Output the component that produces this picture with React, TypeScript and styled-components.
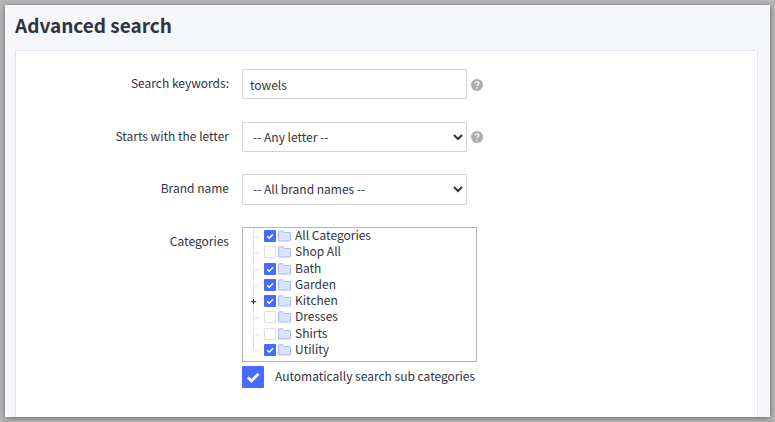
import React from "react";
import styled, { createGlobalStyle } from "styled-components";

const GlobalStyle = createGlobalStyle`
  *, *::before, *::after { box-sizing: border-box; }
  html, body { margin: 0; background: #b7b7b8; }
  body, input, select {
    font-family: "Source Sans Pro", "Noto Sans CJK SC", sans-serif;
    font-size: 12px;
    color: #313440;
  }
`;

const Backdrop = styled.div`
  display: flex;
  min-height: 100vh;
  padding: 5px;
`;

const Page = styled.main`
  display: flex;
  flex: 1;
  flex-direction: column;
  padding: 0 12px 0 10px;
  background: #f5f7fa;
  box-shadow: 0 1px 6px rgba(0, 0, 0, 0.45);
`;

const Title = styled.h1`
  margin: 0;
  height: 45px;
  font-size: 19px;
  font-weight: 700;
  line-height: 40px;
  color: #313440;
`;

const Panel = styled.form`
  display: flex;
  flex: 1;
  flex-direction: column;
  gap: 22px;
  padding: 18px 0 28px;
  background: #fff;
  border: 1px solid #e2e5ee;
  border-bottom: 0;
`;

const Row = styled.div`
  display: grid;
  grid-template-columns: 213px 1fr;
  column-gap: 13px;
  align-items: start;
`;

const Label = styled.label`
  text-align: right;
  line-height: 28px;
`;

const Caption = styled.span`
  text-align: right;
  line-height: 28px;
`;

const Control = styled.div<{ $height: number }>`
  display: flex;
  align-items: center;
  gap: 4px;
  height: ${(p) => p.$height}px;
`;

const TextInput = styled.input`
  align-self: flex-start;
  width: 225px;
  height: 30px;
  padding: 0 7px;
  background: #fff;
  border: 1px solid #d3d4d6;
  border-radius: 1px;
  outline: 0;
`;

const Select = styled.select`
  width: 225px;
  height: 100%;
  padding: 0 1px 2px 6px;
  background: #fff;
  border: 1px solid #d3d4d6;
  border-radius: 1px;
`;

const HelpButton = styled.button`
  display: flex;
  padding: 0;
  border: 0;
  background: none;
`;

const Tree = styled.ul`
  display: flex;
  flex-direction: column;
  width: 235px;
  height: 135px;
  margin: 0;
  padding: 0 0 3px 8px;
  list-style: none;
  border: 1px solid #b5b6b7;
`;

const TreeItem = styled.li`
  display: flex;
  flex: 1;
  align-items: center;
  min-height: 0;
  line-height: 16px;
`;

const Branch = styled.svg`
  flex: none;
  align-self: stretch;
  width: 13px;
  height: auto;
`;

const TreeLabel = styled.label`
  display: flex;
  align-items: center;
  gap: 2px;
`;

const Name = styled.span`
  margin-left: 2px;
  padding-bottom: 2px;
`;

const tick =
  "url(\"data:image/svg+xml,%3Csvg xmlns='http://www.w3.org/2000/svg' viewBox='0 0 12 12'%3E%3Cpath d='M3.2 6.2l2 2 3.8-4' fill='none' stroke='white' stroke-width='1.5'/%3E%3C/svg%3E\")";

const Checkbox = styled.input<{ $size: number }>`
  appearance: none;
  flex: none;
  width: ${(p) => p.$size}px;
  height: ${(p) => p.$size}px;
  margin: 0;
  background: #fff;
  border: 1px solid #e0e0e2;
  border-radius: 1px;

  &:checked {
    background: #476bff ${tick} center / 100% 100%;
    background-origin: border-box;
    border-color: transparent;
  }
`;

const SubCategories = styled.label`
  display: flex;
  align-items: center;
  gap: 11px;
  margin-top: 4px;
  line-height: 20px;
`;

const SubCategoriesText = styled.span`
  padding-bottom: 2px;
`;

const Help = ({ about }: { about: string }) => (
  <HelpButton type="button" aria-label={`Help: ${about}`}>
    <svg width="12" height="12" viewBox="0 0 12 12" aria-hidden="true">
      <circle cx="6" cy="6" r="6" fill="#acacb5" />
      <path
        d="M4.2 4.6c0-2.2 3.6-2.2 3.6-.1C7.8 5.8 6 5.7 6 7.1M6 8.2v1.3"
        fill="none"
        stroke="#fff"
        strokeWidth="1.3"
      />
    </svg>
  </HelpButton>
);

const Folder = () => (
  <svg width="13" height="12" viewBox="0 0 13 12" aria-hidden="true">
    <path
      d="M.5 10.5v-9q0-.7.7-.7h3.600l1.500 1.700h5.500q.7 0 .7.7v7.300q0 .5-.5.5H1q-.5 0-.5-.5z"
      fill="#dae3ff"
      stroke="#a9b9f3"
    />
  </svg>
);

type Category = { name: string; checked: boolean; expandable?: boolean };

const categories: Category[] = [
  { name: "All Categories", checked: true },
  { name: "Shop All", checked: false },
  { name: "Bath", checked: true },
  { name: "Garden", checked: true },
  { name: "Kitchen", checked: true, expandable: true },
  { name: "Dresses", checked: false },
  { name: "Shirts", checked: false },
  { name: "Utility", checked: true },
];

const BranchLines = ({ last, expandable }: { last: boolean; expandable?: boolean }) => (
  <Branch viewBox="0 0 13 16" preserveAspectRatio="none" aria-hidden="true">
    <path
      d={last ? "M2.500 0V8.500H9" : "M2.500 0V16M3 8.500H9"}
      fill="none"
      stroke="#c9c9cc"
      strokeDasharray="1 1"
    />
    {expandable && (
      <>
        <path d="M0 5h5v7H0z" fill="#fff" />
        <path d="M0 8.500h5M2.500 6v5" stroke="#222" />
      </>
    )}
  </Branch>
);

export default function App() {
  return (
    <>
      <GlobalStyle />
      <Backdrop>
        <Page>
          <Title>Advanced search</Title>
          <Panel>
            <Row>
              <Label htmlFor="keywords">Search keywords:</Label>
              <Control $height={31}>
                <TextInput id="keywords" type="text" defaultValue="towels" />
                <Help about="search keywords" />
              </Control>
            </Row>
            <Row>
              <Label htmlFor="letter">Starts with the letter</Label>
              <Control $height={30}>
                <Select id="letter">
                  <option>-- Any letter --</option>
                </Select>
                <Help about="starting letter" />
              </Control>
            </Row>
            <Row>
              <Label htmlFor="brand">Brand name</Label>
              <Control $height={31}>
                <Select id="brand">
                  <option>-- All brand names --</option>
                </Select>
              </Control>
            </Row>
            <Row>
              <Caption id="categories">Categories</Caption>
              <div>
                <Tree aria-labelledby="categories">
                  {categories.map((c, i) => (
                    <TreeItem key={c.name}>
                      <BranchLines last={i === categories.length - 1} expandable={c.expandable} />
                      <TreeLabel>
                        <Checkbox type="checkbox" $size={12} defaultChecked={c.checked} />
                        <Folder />
                        <Name>{c.name}</Name>
                      </TreeLabel>
                    </TreeItem>
                  ))}
                </Tree>
                <SubCategories>
                  <Checkbox type="checkbox" $size={22} defaultChecked />
                  <SubCategoriesText>Automatically search sub categories</SubCategoriesText>
                </SubCategories>
              </div>
            </Row>
          </Panel>
        </Page>
      </Backdrop>
    </>
  );
}
